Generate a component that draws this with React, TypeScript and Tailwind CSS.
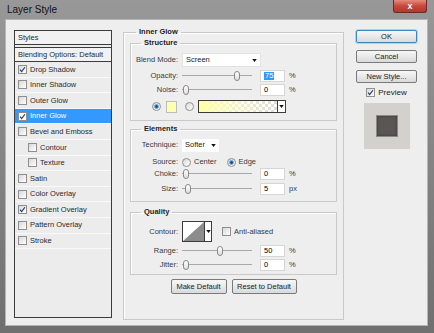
import React from "react";

const styleItems = [
  { name: "Drop Shadow", checked: true },
  { name: "Inner Shadow" },
  { name: "Outer Glow" },
  { name: "Inner Glow", checked: true, selected: true },
  { name: "Bevel and Emboss" },
  { name: "Contour", sub: true },
  { name: "Texture", sub: true },
  { name: "Satin" },
  { name: "Color Overlay" },
  { name: "Gradient Overlay", checked: true },
  { name: "Pattern Overlay" },
  { name: "Stroke" },
];

function Checkbox({ checked, light }: { checked?: boolean; light?: boolean }) {
  return (
    <span
      className={`flex h-[9px] w-[9px] shrink-0 items-center justify-center border border-[#8f8f8f] ${
        light ? "bg-white" : "bg-gradient-to-br from-[#d8d8d8] to-white"
      }`}
    >
      {checked && (
        <svg viewBox="0 0 8 8" className="h-[7px] w-[7px]">
          <path d="M1.2 4.2 L3 6.3 L6.8 1.4" fill="none" stroke="#20366a" strokeWidth="1.3" />
        </svg>
      )}
    </span>
  );
}

function Radio({ on }: { on?: boolean }) {
  return (
    <span className="flex h-[9px] w-[9px] shrink-0 items-center justify-center rounded-full border border-[#8f8f8f] bg-gradient-to-br from-[#d8d8d8] to-white">
      {on && <span className="h-[5px] w-[5px] rounded-full border border-[#6fb3e8] bg-[#1d4f8f]" />}
    </span>
  );
}

function Arrow() {
  return (
    <svg viewBox="0 0 6 4" className="h-[3px] w-[5px]">
      <path d="M0 0 H6 L3 4 Z" fill="#111" />
    </svg>
  );
}

function Slider({ pos }: { pos: string }) {
  return (
    <div className="relative h-[12px] w-[70px]">
      <div className="absolute left-0 right-0 top-[5px] h-[2px] border-t border-[#a8a8a8] border-b-white" />
      <div className={`absolute top-[1px] h-[10px] w-[6px] rounded-[3px] border border-[#8a8a8a] bg-gradient-to-b from-white to-[#dedede] ${pos}`} />
    </div>
  );
}

function Field({ value, selected }: { value: string; selected?: boolean }) {
  return (
    <div className="flex h-[12px] w-[25px] items-center border border-[#d6d6d6] bg-white pl-[3px]">
      <span className={selected ? "bg-[#3399ff] px-[1px] text-white" : ""}>{value}</span>
    </div>
  );
}

function Label({ children }: { children: React.ReactNode }) {
  return <span className="w-[51px] shrink-0 pr-[4px] text-right text-[#3a3a3a]">{children}</span>;
}

function SliderRow({ label, pos, value, unit, selected, className = "" }: { label: string; pos: string; value: string; unit: string; selected?: boolean; className?: string }) {
  return (
    <div className={`flex h-[12px] items-center ${className}`}>
      <Label>{label}</Label>
      <Slider pos={pos} />
      <div className="ml-[8px]">
        <Field value={value} selected={selected} />
      </div>
      <span className="ml-[4px] text-[#3a3a3a]">{unit}</span>
    </div>
  );
}

function Group({ title, children, className = "" }: { title: string; children: React.ReactNode; className?: string }) {
  return (
    <fieldset className={`border border-[#c9c9c9] shadow-[inset_1px_1px_0_#fff] ${className}`}>
      <legend className="ml-[10px] px-[3px] font-bold leading-[10px] text-[#222]">{title}</legend>
      {children}
    </fieldset>
  );
}

function Button({ children, focus, className = "" }: { children: React.ReactNode; focus?: boolean; className?: string }) {
  return (
    <div
      className={`flex items-center justify-center rounded-[2px] border bg-gradient-to-b from-[#f7f7f7] to-[#dadada] text-[#222] ${
        focus ? "border-[#3a87bd] shadow-[0_0_0_1px_#9bdcf7]" : "border-[#7a7a7a]"
      } ${className}`}
    >
      {children}
    </div>
  );
}

export default function App() {
  return (
    <div className="flex h-[333px] w-[434px] flex-col bg-gradient-to-b from-[#989898] to-[#6f6f6f] font-['Liberation_Sans',Tahoma,sans-serif] text-[7.5px] leading-none">
      <div className="flex h-[19px] shrink-0 items-start justify-between">
        <span className="ml-[7px] mt-[5px] text-[10px] text-[#111]">Layer Style</span>
        <div className="mr-[7px] flex h-[13px] w-[34px] items-center justify-center rounded-b-[3px] border border-t-0 border-[#6e2a22] bg-gradient-to-b from-[#e58a7c] via-[#c8463a] to-[#b23a2e] text-[9px] font-bold text-white">
          x
        </div>
      </div>

      <div className="mb-[7px] ml-[5px] mr-[6px] flex flex-1 border border-[#b5b5b5] bg-[#eeeeee]">
        <div className="mb-[7px] ml-[8px] mt-[10px] flex w-[98px] flex-col border border-[#3c3c3c] bg-[#ececec] text-[#2a2a2a]">
          <div className="flex h-[14px] items-center border-b border-[#3c3c3c] bg-[#f2f2f2] pl-[3px]">Styles</div>
          <div className="mt-[2px] flex h-[15px] items-center border-y border-[#3c3c3c] bg-[#f2f2f2] pl-[3px]">Blending Options: Default</div>
          {styleItems.map((s) => (
            <div
              key={s.name}
              className={`flex h-[15.6px] items-center gap-[3px] border-b border-[#f9f9f9] ${s.sub ? "pl-[13px]" : "pl-[3px]"} ${
                s.selected ? "bg-[#3399ff] text-white" : ""
              }`}
            >
              <Checkbox checked={s.checked} light={s.selected} />
              <span>{s.name}</span>
            </div>
          ))}
        </div>

        <fieldset className="mb-[5px] ml-[11px] mt-[7px] w-[221px] border border-[#c9c9c9] px-[6px] shadow-[inset_1px_1px_0_#fff]">
          <legend className="ml-[6px] px-[3px] font-bold leading-[10px] text-[#222]">Inner Glow</legend>

          <Group title="Structure" className="mt-[1px] pb-[7px]">
            <div className="mt-[5px] flex h-[14px] items-center">
              <Label>Blend Mode:</Label>
              <div className="flex h-[14px] w-[79px] items-center justify-between border border-[#e2e2e2] bg-white pl-[3px] pr-[3px]">
                <span className="text-[#222]">Screen</span>
                <Arrow />
              </div>
            </div>
            <SliderRow label="Opacity:" pos="left-[52px]" value="75" unit="%" selected className="mt-[2px] h-[14px]" />
            <SliderRow label="Noise:" pos="left-[1px]" value="0" unit="%" className="h-[14px]" />
            <div className="mt-[3px] flex h-[13px] items-center">
              <span className="ml-[21px]">
                <Radio on />
              </span>
              <span className="ml-[5px] h-[12px] w-[11px] border border-[#bdbdbd] bg-[#ffffb0]" />
              <span className="ml-[8px]">
                <Radio />
              </span>
              <div className="ml-[4px] flex h-[13px] w-[88px] border border-[#3c3c3c] bg-white">
                <div className="flex-1 bg-[repeating-conic-gradient(#dcdcdc_0_25%,#ffffff_0_50%)] bg-[length:6px_6px]">
                  <div className="h-full bg-gradient-to-r from-[#ffffa8] via-[#ffffd0]/60 to-transparent" />
                </div>
                <div className="flex w-[8px] items-center justify-center border-l border-[#3c3c3c]">
                  <Arrow />
                </div>
              </div>
            </div>
          </Group>

          <Group title="Elements" className="mt-[3px] pb-[6px]">
            <div className="mt-[4px] flex h-[14px] items-center">
              <Label>Technique:</Label>
              <div className="flex h-[13px] w-[37px] items-center justify-between bg-white pl-[3px] pr-[3px]">
                <span className="text-[#222]">Softer</span>
                <Arrow />
              </div>
            </div>
            <div className="mt-[4px] flex h-[12px] items-center">
              <Label>Source:</Label>
              <Radio />
              <span className="ml-[3px] text-[#3a3a3a]">Center</span>
              <span className="ml-[10px]">
                <Radio on />
              </span>
              <span className="ml-[3px] text-[#3a3a3a]">Edge</span>
            </div>
            <SliderRow label="Choke:" pos="left-[1px]" value="0" unit="%" />
            <SliderRow label="Size:" pos="left-[3px]" value="5" unit="px" className="mt-[3px]" />
          </Group>

          <Group title="Quality" className="mt-[5px] pb-[3px]">
            <div className="mt-[4px] flex h-[21px] items-center">
              <Label>Contour:</Label>
              <div className="flex h-[21px] w-[30px] border border-[#3c3c3c] bg-white">
                <svg viewBox="0 0 20 20" className="h-full w-[21px]" preserveAspectRatio="none">
                  <polygon points="0,20 20,0 20,20" fill="#8c8c8c" />
                </svg>
                <div className="flex flex-1 items-center justify-center border-l border-[#3c3c3c]">
                  <Arrow />
                </div>
              </div>
              <span className="ml-[10px]">
                <Checkbox />
              </span>
              <span className="ml-[3px] text-[#3a3a3a]">Anti-aliased</span>
            </div>
            <SliderRow label="Range:" pos="left-[35px]" value="50" unit="%" className="mt-[3px]" />
            <SliderRow label="Jitter:" pos="left-[1px]" value="0" unit="%" className="mt-[2px]" />
          </Group>

          <div className="mt-[4px] flex justify-center gap-[5px]">
            <Button className="h-[15px] w-[56px]">Make Default</Button>
            <Button className="h-[15px] w-[65px]">Reset to Default</Button>
          </div>
        </fieldset>

        <div className="ml-[12px] mt-[10px] flex w-[61px] flex-col items-center">
          <Button focus className="h-[13px] w-[61px]">OK</Button>
          <Button className="mt-[7px] h-[13px] w-[61px]">Cancel</Button>
          <Button className="mt-[7px] h-[13px] w-[61px]">New Style...</Button>
          <div className="mt-[5px] flex items-center gap-[3px]">
            <Checkbox checked />
            <span className="text-[8px] text-[#222]">Preview</span>
          </div>
          <div className="mt-[6px] flex h-[46px] w-[46px] items-center justify-center bg-[#d3d1ce]">
            <div className="h-[22px] w-[22px] border border-[#8c8885] bg-[#5a5654] shadow-[inset_0_0_3px_#3a3634]" />
          </div>
        </div>
      </div>
    </div>
  );
}
